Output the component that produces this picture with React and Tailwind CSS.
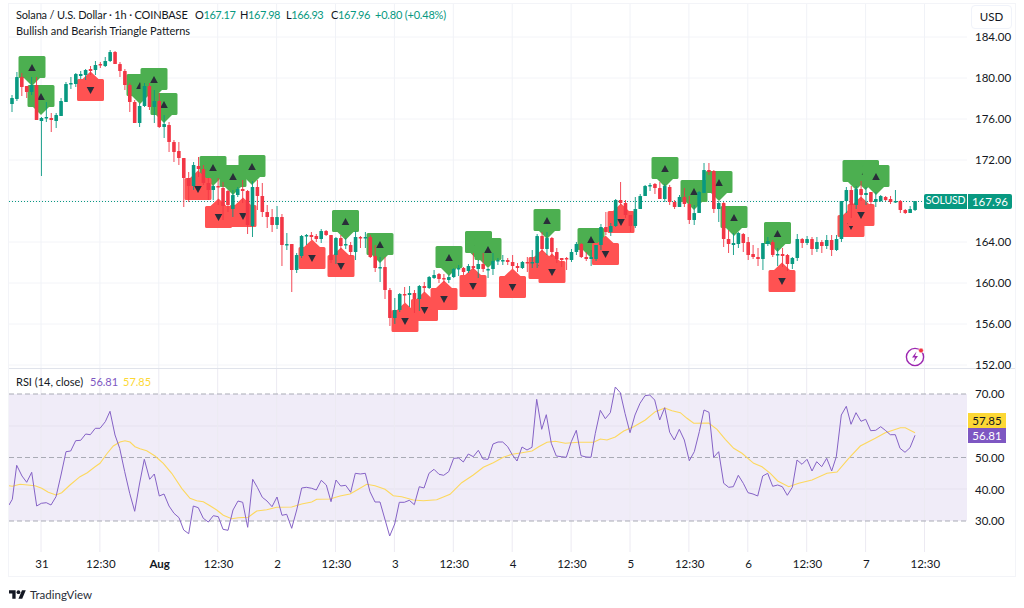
const UP = "#089981";
const DOWN = "#f23645";

// [high, body top, body bottom, low, up] in page pixels
const CANDLES = [
  [95,98,104,112,1],[72,77,99,101,1],[73,77,87,96,0],[86,86,92,98,0],[77,85,92,95,1],[77,85,120,120,0],
  [117,118,121,176,1],[102,117,118,122,1],[113,118,120,132,0],[113,115,121,128,1],[98,101,116,116,1],[82,84,102,102,1],
  [77,83,84,89,1],[73,74,84,87,1],[71,74,76,79,1],[69,70,75,80,1],[66,69,71,75,0],[61,65,70,75,1],
  [62,64,65,68,0],[57,61,66,67,1],[50,52,61,62,1],[51,52,64,64,0],[62,64,71,77,0],[69,71,85,90,0],
  [83,85,102,112,0],[100,102,123,123,0],[103,106,123,127,1],[83,86,106,107,1],[83,86,107,110,0],[90,101,107,123,1],
  [93,101,127,128,0],[115,124,127,138,1],[122,125,142,152,0],[140,142,152,162,0],[142,151,158,165,0],[158,158,178,207,0],
  [172,178,186,202,0],[162,165,186,190,1],[157,166,169,177,0],[165,169,183,185,0],[178,183,190,200,0],[185,186,190,200,1],
  [178,186,187,205,0],[182,188,206,220,0],[190,191,205,212,0],[190,195,209,217,1],[187,189,195,197,1],[180,189,191,203,0],
  [190,191,225,234,0],[181,187,226,237,1],[180,187,196,210,0],[183,196,212,217,0],[205,212,217,228,0],[209,217,225,232,0],
  [206,217,225,229,1],[214,217,245,266,0],[233,244,245,250,1],[244,244,270,292,0],[253,255,270,273,1],[235,236,256,258,1],
  [234,235,236,245,1],[232,235,237,240,0],[234,236,239,242,0],[229,231,239,243,1],[230,231,235,236,0],[235,235,260,263,0],
  [237,238,255,264,1],[235,238,246,250,0],[238,244,245,249,1],[242,245,252,256,0],[231,237,252,260,1],[236,237,238,248,0],
  [232,237,238,248,1],[235,237,257,258,0],[245,256,268,272,0],[257,267,268,282,1],[257,267,290,299,0],[288,290,318,326,0],
  [298,310,318,324,1],[293,294,310,312,1],[287,294,295,303,0],[286,293,295,307,1],[290,293,299,313,0],[285,286,299,311,1],
  [282,286,288,293,0],[276,277,288,289,1],[270,275,278,279,1],[273,274,279,283,0],[274,278,279,283,0],[275,277,280,283,1],
  [268,269,277,278,1],[265,268,269,276,1],[267,268,272,275,0],[264,266,271,273,1],[253,266,268,270,0],[260,264,269,278,1],
  [253,264,269,272,0],[268,269,270,278,1],[253,261,269,275,1],[258,260,261,265,1],[255,260,261,265,1],[258,260,262,265,0],
  [255,262,266,269,0],[263,266,268,272,0],[261,262,268,269,1],[257,262,263,272,0],[250,262,263,268,1],[234,236,263,268,1],
  [232,236,249,252,0],[232,238,249,255,1],[237,238,252,257,0],[248,252,259,263,0],[258,258,260,267,0],[257,258,259,270,0],
  [249,252,260,262,1],[242,244,252,255,1],[243,244,257,258,0],[252,257,259,261,0],[250,257,259,266,1],[245,245,259,261,1],
  [224,227,245,250,1],[212,227,232,235,0],[223,226,232,236,1],[199,200,226,227,1],[182,200,203,205,0],[200,203,215,218,0],
  [215,215,226,232,0],[197,209,226,228,1],[194,196,209,209,1],[185,186,196,196,1],[183,185,186,191,1],[183,184,188,194,0],
  [182,188,199,199,0],[184,186,199,202,1],[185,187,202,205,0],[200,202,207,209,0],[195,197,207,207,1],[188,197,204,207,0],
  [196,204,220,224,0],[205,213,220,225,1],[191,192,213,213,1],[163,170,193,193,1],[163,170,172,175,0],[170,171,209,213,0],
  [201,203,209,222,1],[202,203,239,247,0],[230,239,244,253,0],[233,243,245,255,1],[232,233,244,248,1],[233,234,243,252,0],
  [237,242,255,260,0],[245,254,257,259,0],[248,257,259,266,0],[243,243,259,270,1],[237,241,244,246,1],[240,242,255,257,0],
  [248,254,255,266,1],[248,254,256,267,0],[254,255,264,271,0],[257,258,264,269,1],[234,239,258,261,1],[238,239,243,248,0],
  [236,239,243,245,1],[237,239,249,255,0],[237,242,249,252,1],[240,242,246,253,0],[235,240,246,249,1],[235,240,250,256,0],
  [235,239,250,251,1],[201,201,239,242,1],[187,190,201,213,1],[186,190,205,218,0],[186,189,205,209,1],[181,189,195,201,0],
  [187,193,195,205,1],[192,192,202,205,0],[192,199,202,207,1],[195,196,201,202,1],[196,197,200,201,0],[196,199,202,204,0],
  [190,201,202,203,1],[200,201,210,213,0],[209,210,213,214,0],[206,209,213,213,1],[201,201,210,211,1],
];

// centre x, top of the box
const GREEN_FLAGS = [
  [32,56],[41,85],[140,74],[154,68],[164,93],[213,156],[233,165],[252,155],[345.5,210],[380,233],[449,246],[478.5,231],
  [488,238],[547,209],[591,228],[665,157],[694,180],[719,171],[734,206],[777.5,222],[856,160],[865.5,160],[876,165],
];
const RED_FLAGS = [
  [90.5,79],[198,178],[218.5,206],[243,205],[312,247],[341,255],[405,310],[424.5,299],[444,288],[473,275],[512.5,276],
  [542,257],[552,261],[605.5,243],[621,211],[782,270],[851,215],[861,204],
];

// RSI traced from the reference, two runs: x = x0 + zx/3, y = 370 + zy/3
const RSI_LEFT = [27,405,37,388,50,286,66,318,80,337,95,307,110,408,124,400,139,398,153,405,168,380,183,315,198,245,212,243,227,212,242,211,257,192,271,194,286,175,300,175,316,155,330,124,345,195,359,235,374,305,389,370,404,424,418,345,433,268,449,328,463,312,478,378,492,372,507,408,522,430,537,443,551,480,566,491,580,408,595,413,610,445,625,456,640,437,655,440,669,478,684,481,699,420,714,393,728,397,743,472,758,328,772,352,787,382,801,393,816,410,831,381,846,436,860,433,875,475,890,420,905,354,919,352,935,355,949,360,964,331,979,345,993,395,1008,330,1022,348,1037,346,1052,367,1066,310,1081,312,1096,310,1110,365,1125,396,1140,396,1169,498,1184,462,1198,397,1213,397,1228,391,1243,404,1258,350,1272,354,1287,310,1302,298,1317,313,1331,316,1346,305,1361,265,1376,264,1390,276,1405,252,1420,260,1435,241,1449,267,1464,268,1479,222,1494,216,1508,216,1523,230,1536,253];
const RSI_RIGHT = [0,253,15,273,30,231,45,240,60,232,74,88,89,178,103,134,118,220,133,258,148,260,163,262,178,215,193,181,207,257,222,261,237,262,250,190,265,121,280,146,295,128,310,51,325,68,339,130,354,188,369,135,384,100,399,77,413,75,428,90,443,150,458,113,473,187,487,210,502,178,517,210,532,272,547,245,562,185,576,120,591,127,605,262,620,245,635,340,650,352,664,350,679,316,694,340,708,368,723,372,737,378,752,318,767,310,782,349,797,345,811,350,826,376,841,352,855,270,870,283,885,268,900,303,914,275,929,290,944,265,959,303,973,260,988,135,1003,109,1017,163,1032,128,1047,154,1061,148,1076,182,1091,181,1106,170,1120,181,1135,194,1150,194,1164,235,1179,247,1194,233,1209,196];
const MA_LEFT = [27,347,37,349,60,343,90,346,105,347,125,355,145,367,168,375,185,368,210,345,240,320,262,308,285,290,300,280,320,252,340,228,360,216,375,212,390,216,405,230,420,236,440,242,465,258,490,280,515,310,545,355,570,385,590,392,610,395,630,407,650,420,670,436,695,446,715,443,745,442,770,423,800,419,830,412,875,411,905,402,935,396,950,388,990,387,1020,378,1050,372,1075,358,1100,343,1125,347,1155,358,1180,377,1205,380,1240,390,1270,392,1310,389,1350,373,1385,338,1420,315,1450,292,1480,278,1510,262,1536,253];
const MA_RIGHT = [0,253,30,248,60,243,80,230,105,217,130,214,160,220,200,217,245,217,265,207,285,210,310,201,335,183,365,170,400,150,430,125,458,114,480,122,505,128,525,145,545,160,590,159,615,178,640,208,665,235,690,250,725,280,750,290,775,310,797,333,830,350,860,340,900,330,945,310,975,306,1010,265,1045,228,1090,205,1120,188,1165,173,1180,173,1209,188];

// the 168.00 slot is hidden behind the SOLUSD price tag
const PRICES = ["184.00", "180.00", "176.00", "172.00", "", "164.00", "160.00", "156.00", "152.00"];
const TIMES = ["31", "12:30", "Aug", "12:30", "2", "12:30", "3", "12:30", "4", "12:30", "5", "12:30", "6", "12:30", "7", "12:30"];
const GRID_X = TIMES.map((_, i) => 41 + i * 58.9);

function toPoints(run, x0) {
  const out = [];
  for (let i = 0; i < run.length; i += 2) {
    out.push(`${(x0 + run[i] / 3).toFixed(1)},${(370 + run[i + 1] / 3).toFixed(1)}`);
  }
  return out.join(" ");
}

function GreenFlag({ x, y }) {
  return (
    <g>
      <path
        d={`M${x - 12} ${y}h24a1.5 1.5 0 0 1 1.5 1.5v19a1.5 1.5 0 0 1-1.5 1.5h-4l-8 8-8-8h-4a1.5 1.5 0 0 1-1.5-1.5v-19a1.5 1.5 0 0 1 1.5-1.5z`}
        fill="#4caf50"
      />
      <path d={`M${x} ${y + 8}l3.8 7h-7.6z`} fill="#2a2e39" />
    </g>
  );
}

function RedFlag({ x, y }) {
  return (
    <g>
      <path
        d={`M${x - 12} ${y}h4l8-7.5 8 7.5h4a1.5 1.5 0 0 1 1.5 1.5v19a1.5 1.5 0 0 1-1.5 1.5h-24a1.5 1.5 0 0 1-1.5-1.5v-19a1.5 1.5 0 0 1 1.5-1.5z`}
        fill="#ff5252"
      />
      <path d={`M${x} ${y + 15}l-3.8-7h7.6z`} fill="#2a2e39" />
    </g>
  );
}

function Candle({ x, c }) {
  const color = c[4] ? UP : DOWN;
  return (
    <g>
      <line x1={x} x2={x} y1={c[0]} y2={c[3]} stroke={color} strokeWidth="0.9" />
      <rect x={x - 1.8} y={c[1]} width="3.6" height={Math.max(c[2] - c[1], 1.4)} rx="0.5" fill={color} />
    </g>
  );
}

function MainChart() {
  return (
    <svg className="block h-[364px] w-[958px]" viewBox="9 4 958 364">
      {PRICES.map((_, i) => (
        <line key={i} x1="9" x2="967" y1={37 + i * 41} y2={37 + i * 41} stroke="#f3f4f8" />
      ))}
      {GRID_X.map((x) => (
        <line key={x} x1={x} x2={x} y1="4" y2="368" stroke="#f0f2f7" />
      ))}
      <line x1="9" x2="924" y1="201.5" y2="201.5" stroke={UP} strokeDasharray="1 2" />
      {GREEN_FLAGS.map(([x, y]) => (
        <GreenFlag key={x} x={x} y={y} />
      ))}
      {RED_FLAGS.map(([x, y]) => (
        <RedFlag key={x} x={x} y={y} />
      ))}
      <path d="M849.5 226h3l-1.5 2.5z" fill="#2a2e39" />
      {CANDLES.map((c, i) => (
        <Candle key={i} x={12 + i * 4.908} c={c} />
      ))}
      <circle cx="915" cy="357" r="8.6" fill="none" stroke="#9c27b0" strokeWidth="1.4" />
      <path d="M916.5 351.5l-4.5 6h3l-1.5 4.5 4.5-6h-3z" fill="#9c27b0" />
      <circle cx="921" cy="350.5" r="2.4" fill="#f23645" stroke="#fff" strokeWidth="0.6" />
    </svg>
  );
}

function RsiChart() {
  return (
    <svg className="block h-[183px] w-[958px]" viewBox="9 369 958 183">
      <rect x="9" y="394" width="958" height="127" fill="#f0ecf8" />
      {[426, 489].map((y) => (
        <line key={y} x1="9" x2="967" y1={y} y2={y} stroke="#e6e2ef" />
      ))}
      {GRID_X.map((x) => (
        <line key={x} x1={x} x2={x} y1="369" y2="552" stroke="#eceaf2" />
      ))}
      {[394, 457.5, 521].map((y) => (
        <line key={y} x1="9" x2="967" y1={y} y2={y} stroke="#a9abb5" strokeDasharray="5 3" />
      ))}
      <polyline points={toPoints(MA_LEFT, 0)} fill="none" stroke="#fdd85d" strokeWidth="1.1" />
      <polyline points={toPoints(MA_RIGHT, 512)} fill="none" stroke="#fdd85d" strokeWidth="1.1" />
      <polyline points={toPoints(RSI_LEFT, 0)} fill="none" stroke="#8562c6" strokeWidth="1" />
      <polyline points={toPoints(RSI_RIGHT, 512)} fill="none" stroke="#8562c6" strokeWidth="1" />
    </svg>
  );
}

function PriceAxis() {
  return (
    <div className="flex w-[48px] flex-col pl-[4px] pt-px">
      <div className="flex h-[24px] w-[41px] shrink-0 items-center justify-center rounded-[4px] border border-[#f0f3fa] text-[11.5px] text-[#131722]">
        USD
      </div>
      <div className="flex flex-col gap-[25px]">
        {PRICES.map((p, i) => (
          <div key={i} className="flex h-[16px] shrink-0 items-center pl-[4px] text-[11.5px] text-[#131722]">
            {p}
          </div>
        ))}
      </div>
    </div>
  );
}

function RsiAxis() {
  return (
    <div className="w-[48px] pt-[9px]">
      {["70.00", "", "50.00", "40.00", "30.00"].map((p, i) => (
        <div key={i} className="flex h-[31.75px] items-center pl-[8px] text-[11.5px] text-[#131722]">
          {p}
        </div>
      ))}
    </div>
  );
}

export default function App() {
  return (
    <div className="relative h-[608px] w-[1024px] overflow-hidden bg-white pl-2 pt-[3px] font-['Lato',sans-serif]">
      <div className="flex h-[574px] w-[1008px] flex-col border border-[#f3f4f8]">
        <div className="flex h-[365px] border-b border-[#e0e3eb]">
          <MainChart />
          <PriceAxis />
        </div>
        <div className="flex h-[183px]">
          <RsiChart />
          <RsiAxis />
        </div>
        <div className="flex h-[24px] pl-[3.5px]">
          {TIMES.map((t, i) => (
            <div
              key={i}
              className={`flex w-[58.9px] items-center justify-center text-[11.5px] text-[#131722] ${t === "Aug" ? "font-bold" : ""}`}
            >
              {t}
            </div>
          ))}
        </div>
      </div>

      <div className="mt-[10px] flex items-center gap-[4px] pl-px">
        <svg className="h-[9px] w-[17px]" viewBox="0 4 36 18" fill="#131722">
          <path d="M14 22H7V11H0V4h14v18zM28 22h-8l7.5-18h8L28 22z" />
          <circle cx="20" cy="8" r="4" />
        </svg>
        <span className="text-[11.5px] leading-[15px] text-[#2a2e39]">TradingView</span>
      </div>

      <div className="absolute left-[16px] top-[8px] flex h-[15px] items-center whitespace-nowrap text-[11px] text-[#131722]">
        <span className="w-[179px] tracking-[-0.15px]">Solana / U.S. Dollar · 1h · COINBASE</span>
        <span className="w-[45px] tracking-[-0.4px]">O<span className="text-[#089981]">167.17</span></span>
        <span className="w-[46px] tracking-[-0.4px]">H<span className="text-[#089981]">167.98</span></span>
        <span className="w-[45px] tracking-[-0.4px]">L<span className="text-[#089981]">166.93</span></span>
        <span className="w-[44px] tracking-[-0.4px]">C<span className="text-[#089981]">167.96</span></span>
        <span className="tracking-[-0.2px] text-[#089981]">+0.80 (+0.48%)</span>
      </div>
      <div className="absolute left-[16px] top-[23px] h-[15px] whitespace-nowrap text-[11px] leading-[15px] text-[#131722]">
        Bullish and Bearish Triangle Patterns
      </div>
      <div className="absolute left-[16px] top-[375px] flex h-[15px] items-center whitespace-nowrap text-[11px] text-[#131722]">
        <span className="w-[74px]">RSI (14, close)</span>
        <span className="w-[33px] text-[#7e57c2]">56.81</span>
        <span className="text-[#fdd835]">57.85</span>
      </div>

      <div className="absolute left-[924px] top-[193.5px] flex h-[15.5px] w-[43px] items-center justify-center rounded-l-[2px] bg-[#089981] text-[10.5px] tracking-[-0.2px] text-white">
        SOLUSD
      </div>
      <div className="absolute left-[968px] top-[193.5px] flex h-[15.5px] w-[44px] items-center justify-center rounded-r-[2px] bg-[#089981] text-[11.5px] text-white">
        167.96
      </div>
      <div className="absolute left-[968px] top-[413px] flex h-[15px] w-[38px] items-center justify-center bg-[#fdd835] text-[11.5px] text-[#131722]">
        57.85
      </div>
      <div className="absolute left-[968px] top-[428px] flex h-[15px] w-[38px] items-center justify-center bg-[#7e57c2] text-[11.5px] text-white">
        56.81
      </div>
    </div>
  );
}
